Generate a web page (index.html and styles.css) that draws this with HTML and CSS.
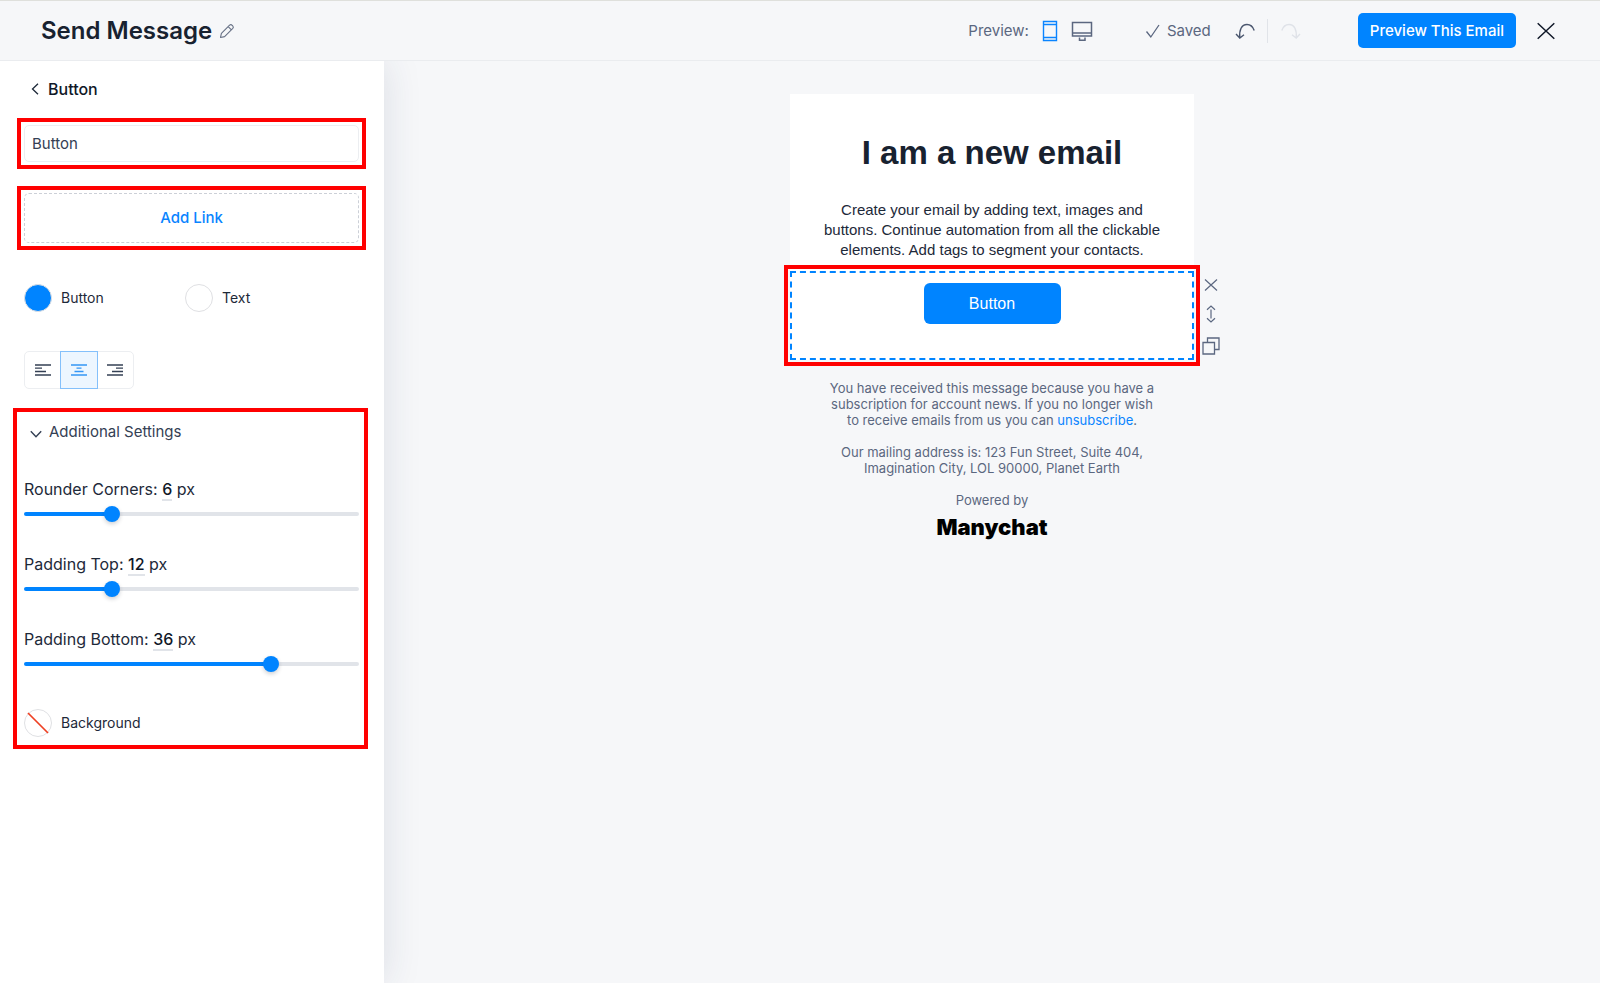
FILE: index.html
```html
<!DOCTYPE html>
<html lang="en">
<head>
<meta charset="utf-8">
<title>Send Message</title>
<link rel="stylesheet" href="styles.css">
</head>
<body>
<header class="topbar">
  <h1 class="title">Send Message</h1>
  <button class="icon-btn edit" aria-label="Rename">
    <svg width="16" height="16" viewBox="0 0 16 16" fill="none" stroke="#667085" stroke-width="1.1" stroke-linejoin="round"><path d="M1.5 14.5 2.4 10.4 10.6 2.2Q11.9 1 13.2 2.3L13.7 2.8Q15 4.1 13.8 5.4L5.6 13.6ZM9.2 3.6l3.2 3.2"/></svg>
  </button>
  <div class="preview">
    <span>Preview:</span>
    <button class="icon-btn" aria-label="Mobile">
      <svg width="16" height="22" viewBox="0 0 16 22" fill="none" stroke="#0a84ff" stroke-width="1.4"><path d="M1.5 1.5h13v19h-13zM1.5 4.5h13M1.5 17.5h13"/></svg>
    </button>
    <button class="icon-btn" aria-label="Desktop">
      <svg width="22" height="22" viewBox="0 0 22 22" fill="none" stroke="#5b6780" stroke-width="1.5"><path d="M1.5 2.5h19v13.500h-19zM1.500 13h19M8.500 17.500v2.800h5.500v-2.800"/></svg>
    </button>
  </div>
  <div class="saved">
    <svg width="16" height="16" viewBox="0 0 16 16" fill="none" stroke="#5b6780" stroke-width="1.300"><path d="M1.500 8.500 5.800 14 14 2"/></svg>
    <span>Saved</span>
  </div>
  <div class="history">
    <button class="icon-btn" aria-label="Undo">
      <svg width="20" height="18" viewBox="0 0 20 18" fill="none" stroke="#4a566e" stroke-width="1.400"><path d="M1 12l3.800 4L9 12.800M4.800 16C4 8 6.500 2.500 12 2.500c4 0 6 2.500 7.200 6"/></svg>
    </button>
    <button class="icon-btn redo" aria-label="Redo" disabled>
      <svg width="20" height="18" viewBox="0 0 20 18" fill="none" stroke="#dfe2e8" stroke-width="1.400"><path d="M19 12l-3.800 4L11 12.800M15.200 16C16 8 13.500 2.500 8 2.500c-4 0-6 2.500-7.200 6"/></svg>
    </button>
  </div>
  <button class="primary">Preview This Email</button>
  <button class="icon-btn" aria-label="Close">
    <svg width="18" height="18" viewBox="0 0 18 18" fill="none" stroke="#101828" stroke-width="1.500"><path d="M.7 1.200l16.600 15.600M17.300 1.200.7 16.800"/></svg>
  </button>
</header>
<div class="workspace">
  <aside class="sidebar">
    <button class="back">
      <svg width="8" height="12" viewBox="0 0 8 12" fill="none" stroke="#1d2939" stroke-width="1.300"><path d="M7 .8 1.500 6 7 11.200"/></svg>
      <span>Button</span>
    </button>
    <div class="marked field">
      <input class="text-input" type="text" value="Button" aria-label="Button caption">
    </div>
    <div class="marked field">
      <button class="add-link">Add Link</button>
    </div>
    <div class="kinds">
      <label class="kind"><input type="radio" name="kind" checked><span>Button</span></label>
      <label class="kind"><input type="radio" name="kind"><span>Text</span></label>
    </div>
    <div class="aligns">
      <button class="align" aria-label="Align left"><svg width="16" height="12" viewBox="0 0 16 12" fill="none" stroke="#344054" stroke-width="1.300"><path d="M0 1h16M0 4.200h7M0 7.500h11M0 11h16"/></svg></button>
      <button class="align active" aria-label="Align center"><svg width="16" height="12" viewBox="0 0 16 12" fill="none" stroke="#3596f5" stroke-width="1.300"><path d="M0 1h16M5.500 4.200h5M3.500 7.500h9M0 11h16"/></svg></button>
      <button class="align" aria-label="Align right"><svg width="16" height="12" viewBox="0 0 16 12" fill="none" stroke="#344054" stroke-width="1.300"><path d="M0 1h16M9 4.200h7M5 7.500h11M0 11h16"/></svg></button>
    </div>
    <section class="marked settings">
      <button class="toggle">
        <svg width="12" height="8" viewBox="0 0 12 8" fill="none" stroke="#344054" stroke-width="1.400"><path d="M.8 1.200 6 6.800l5.200-5.600"/></svg>
        <span>Additional Settings</span>
      </button>
      <div class="setting">
        <label for="corners">Rounder Corners: <b>6</b> px</label>
        <input id="corners" type="range" min="0" max="24" value="6" style="--fill: 25%">
      </div>
      <div class="setting">
        <label for="top">Padding Top: <b>12</b> px</label>
        <input id="top" type="range" min="0" max="48" value="12" style="--fill: 25%">
      </div>
      <div class="setting">
        <label for="bottom">Padding Bottom: <b>36</b> px</label>
        <input id="bottom" type="range" min="0" max="48" value="36" style="--fill: 75%">
      </div>
      <button class="background">
        <svg width="28" height="28" viewBox="0 0 28 28" fill="none"><circle cx="14" cy="14" r="13.500" stroke="#dfe0e3"/><path d="M4 4l20 20" stroke="#ee4023" stroke-width="1.700"/></svg>
        <span>Background</span>
      </button>
    </section>
  </aside>
  <main class="canvas">
    <article class="email">
      <h2>I am a new email</h2>
      <p class="copy">Create your email by adding text, images and<br>buttons. Continue automation from all the clickable<br>elements. Add tags to segment your contacts.</p>
      <div class="block">
        <button class="email-btn">Button</button>
        <div class="tools">
          <button class="icon-btn" aria-label="Remove"><svg width="14" height="12" viewBox="0 0 14 12" fill="none" stroke="#5b6780" stroke-width="1.200"><path d="M1 .5l12 11M13 .5l-12 11"/></svg></button>
          <button class="icon-btn" aria-label="Move"><svg width="10" height="18" viewBox="0 0 10 18" fill="none" stroke="#5b6780" stroke-width="1.200"><path d="M1 4.800l4-3.800 4 3.800M5 4.500v9M1 13.200 5 17l4-3.800"/></svg></button>
          <button class="icon-btn" aria-label="Duplicate"><svg width="18" height="18" viewBox="0 0 18 18" fill="none" stroke="#5b6780" stroke-width="1.300"><path d="M1 5.500h11.500V17H1zM5.500 5.500V1H17v11.500h-4.500"/></svg></button>
        </div>
      </div>
    </article>
    <footer class="footer">
      <p>You have received this message because you have a<br>subscription for account news. If you no longer wish<br>to receive emails from us you can <a href="#">unsubscribe</a>.</p>
      <p>Our mailing address is: 123 Fun Street, Suite 404,<br>Imagination City, LOL 90000, Planet Earth</p>
      <p>Powered by</p>
      <div class="brand">Manychat</div>
    </footer>
  </main>
</div>
</body>
</html>
```

FILE: styles.css
```css
* { box-sizing: border-box; }
body {
  margin: 0;
  min-height: 100vh;
  display: flex;
  flex-direction: column;
  font: 15px/20px Inter, "Liberation Sans", sans-serif;
  color: #1d2939;
  background: #f6f7f9;
}
button {
  font: inherit;
  color: inherit;
  background: none;
  border: 0;
  padding: 0;
  cursor: pointer;
}
h1, h2, p { margin: 0; }
svg { display: block; }

.topbar {
  display: flex;
  align-items: center;
  height: 61px;
  padding: 0 45px 0 41px;
  border-top: 1px solid #dfe0dc;
  border-bottom: 1px solid #eaecef;
}
.title { font-size: 24px; line-height: 32px; font-weight: 600; color: #182230; }
.edit { margin-left: 7px; }
.preview, .saved, .history { display: flex; align-items: center; color: #5b6780; }
.preview { margin-left: auto; gap: 13px; }
.saved { margin-left: 52px; gap: 6px; }
.history { margin-left: 24px; }
.redo { border-left: 1px solid #e1e4e9; padding: 3px 0 3px 13px; margin-left: 12px; }
.primary {
  height: 35px;
  padding: 0 12px;
  margin: 0 21px 0 57px;
  border-radius: 5px;
  background: #0084ff;
  color: #fff;
  font-weight: 500;
}

.workspace { flex: 1; display: flex; }
.sidebar {
  width: 384px;
  flex: none;
  padding: 17px 16px 0 13px;
  background: #fff;
  box-shadow: 0 0 36px rgba(40, 55, 90, 0.13);
  clip-path: inset(0 -60px 0 0);
}
.back {
  display: flex;
  align-items: center;
  gap: 9px;
  margin-left: 18px;
  font-size: 16px;
  line-height: 22px;
  font-weight: 500;
  color: #101828;
}
.marked { border: 4px solid #f00; }
.field { margin: 17px 2px 0 4px; padding: 3px; }
.back + .field { margin-top: 18px; }
.text-input {
  display: block;
  width: 100%;
  height: 37px;
  padding: 0 7px 1px;
  border: 1px solid #eceef1;
  border-radius: 5px;
  font: inherit;
  color: #344054;
}
.add-link {
  display: block;
  width: 100%;
  height: 50px;
  border: 1px dashed #ccd0d7;
  border-radius: 5px;
  color: #0a84ff;
  font-weight: 500;
}
.kinds { display: flex; margin: 34px 0 0 11px; }
.kind { display: flex; align-items: center; gap: 9px; width: 161px; font-size: 14px; }
.kind input {
  appearance: none;
  width: 28px;
  height: 28px;
  margin: 0;
  border: 1px solid #dfe0e3;
  border-radius: 50%;
}
.kind input:checked { background: #0084ff; }
.aligns {
  display: flex;
  width: max-content;
  margin: 39px 0 0 11px;
  border: 1px solid #eceef1;
  border-radius: 5px;
}
.align {
  display: grid;
  place-items: center;
  width: 36px;
  height: 36px;
}
.align.active { width: 38px; height: 38px; margin: -1px; border: 1px solid #84c0fb; background: #edf6ff; }

.settings { margin-top: 19px; padding: 10px 5px 8px 7px; }
.toggle { display: flex; align-items: center; gap: 7px; padding-left: 6px; color: #344054; }
.toggle svg { margin-top: 4px; }
.setting { display: flex; flex-direction: column; height: 75px; }
.toggle + .setting { margin-top: 35px; }
.setting label { font-size: 16px; line-height: 24px; }
.setting b { font-weight: 500; color: #101828; border-bottom: 2px solid #e1e4e9; }
.setting input {
  appearance: none;
  display: block;
  width: 100%;
  height: 16px;
  margin: 5px 0 0;
  background: none;
}
.setting input::-webkit-slider-runnable-track {
  height: 4px;
  border-radius: 2px;
  background: linear-gradient(to right, #0084ff var(--fill), #e1e4e9 var(--fill));
}
.setting input::-webkit-slider-thumb {
  appearance: none;
  width: 16px;
  height: 16px;
  margin-top: -6px;
  border-radius: 50%;
  background: #0084ff;
  box-shadow: 0 2px 4px rgba(16, 24, 40, 0.2);
}
.background { display: flex; align-items: center; gap: 9px; margin-top: 7px; font-size: 14px; }

.canvas {
  flex: 1;
  display: flex;
  flex-direction: column;
  align-items: center;
  padding-top: 33px;
}
.email {
  width: 404px;
  padding-top: 40px;
  background: #fff;
  text-align: center;
  font-family: "Liberation Sans", Arial, sans-serif;
}
.email h2 { font-size: 33px; line-height: 38px; color: #182230; }
.copy { margin-top: 28px; font-size: 15px; line-height: 20px; }
.block {
  position: relative;
  margin-top: 11px;
  height: 89px;
  padding-top: 10px;
  border: 2px dashed #0084ff;
  outline: 4px solid #f00;
  outline-offset: 2px;
}
.email-btn {
  width: 137px;
  height: 41px;
  border-radius: 6px;
  background: #0084ff;
  color: #fff;
  font-size: 16px;
}
.tools {
  position: absolute;
  left: 100%;
  top: 6px;
  margin-left: 10px;
  display: flex;
  flex-direction: column;
  align-items: center;
  gap: 14px;
}
.footer {
  margin-top: 20px;
  display: flex;
  flex-direction: column;
  gap: 16px;
  text-align: center;
  font-size: 13px;
  line-height: 16px;
  color: #5b6780;
}
.footer a { color: #0a84ff; text-decoration: none; }
.brand { margin-top: -7px; font-size: 22px; line-height: 20px; font-weight: 900; color: #000; }
```
